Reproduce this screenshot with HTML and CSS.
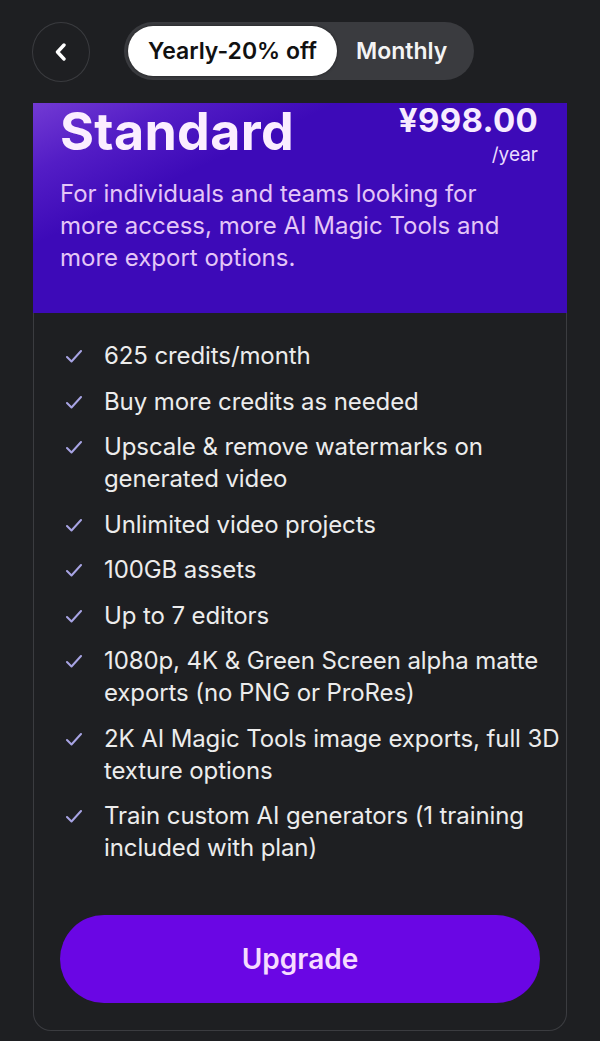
FILE: index.html
```html
<!DOCTYPE html>
<html lang="en">
<head>
<meta charset="utf-8">
<title>Standard plan</title>
<link rel="stylesheet" href="styles.css">
</head>
<body>
<div class="topbar">
  <button class="back" aria-label="Back">
    <svg width="14" height="18" viewBox="0 0 14 18"><polyline points="10,2 3.5,9 10,16" fill="none" stroke="#ffffff" stroke-width="3.4" stroke-linecap="round" stroke-linejoin="round"/></svg>
  </button>
  <div class="toggle">
    <span class="seg active">Yearly-20% off</span>
    <span class="seg">Monthly</span>
  </div>
</div>

<div class="card">
  <div class="card-head">
    <div class="head-row">
      <h1 class="title">Standard</h1>
      <div class="price">
        <div class="amount">¥998.00</div>
        <div class="period">/year</div>
      </div>
    </div>
    <p class="desc">For individuals and teams looking for more access, more AI Magic Tools and more export options.</p>
  </div>
  <ul class="features">
    <li><svg class="check" viewBox="0 0 16 13"><polyline points="1,7 5.5,11.5 15,1" /></svg><span>625 credits/month</span></li>
    <li><svg class="check" viewBox="0 0 16 13"><polyline points="1,7 5.5,11.5 15,1" /></svg><span>Buy more credits as needed</span></li>
    <li><svg class="check" viewBox="0 0 16 13"><polyline points="1,7 5.5,11.5 15,1" /></svg><span>Upscale &amp; remove watermarks on generated video</span></li>
    <li><svg class="check" viewBox="0 0 16 13"><polyline points="1,7 5.5,11.5 15,1" /></svg><span>Unlimited video projects</span></li>
    <li><svg class="check" viewBox="0 0 16 13"><polyline points="1,7 5.5,11.5 15,1" /></svg><span>100GB assets</span></li>
    <li><svg class="check" viewBox="0 0 16 13"><polyline points="1,7 5.5,11.5 15,1" /></svg><span>Up to 7 editors</span></li>
    <li><svg class="check" viewBox="0 0 16 13"><polyline points="1,7 5.5,11.5 15,1" /></svg><span>1080p, 4K &amp; Green Screen alpha matte exports (no PNG or ProRes)</span></li>
    <li><svg class="check" viewBox="0 0 16 13"><polyline points="1,7 5.5,11.5 15,1" /></svg><span>2K AI Magic Tools image exports, full 3D texture options</span></li>
    <li><svg class="check" viewBox="0 0 16 13"><polyline points="1,7 5.5,11.5 15,1" /></svg><span>Train custom AI generators (1 training included with plan)</span></li>
  </ul>
  <div class="cta">
    <button class="upgrade">Upgrade</button>
  </div>
</div>
</body>
</html>
```

FILE: styles.css
```css
* { box-sizing: border-box; }

html, body {
  margin: 0;
  padding: 0;
  background: #1e1f22;
}

body {
  font-family: Inter, "Noto Sans", "Liberation Sans", sans-serif;
  color: #ececec;
  height: 1041px;
  overflow: hidden;
}

.topbar {
  display: flex;
  align-items: center;
  gap: 34px;
  padding: 20px 0 0 32px;
  height: 82px;
}

.back {
  width: 58px;
  height: 60px;
  border-radius: 50%;
  border: 1px solid #3a3b3f;
  background: transparent;
  display: flex;
  align-items: center;
  justify-content: center;
  padding: 0;
  margin-top: 2px;
}

.toggle {
  display: flex;
  align-items: center;
  height: 58px;
  padding: 4px;
  border-radius: 29px;
  background: #3a3b3f;
}

.seg {
  height: 50px;
  display: flex;
  align-items: center;
  padding: 0 23px 0 19px;
  border-radius: 25px;
  font-size: 23px;
  font-weight: 600;
  color: #f4f4f4;
}

.seg.active {
  background: #ffffff;
  color: #111111;
  padding: 0 20px;
  box-shadow: 0 0 3px rgba(0,0,0,0.5);
}

.card {
  margin: 21px 0 0 33px;
  width: 534px;
  border: 1px solid #3b3c40;
  border-top: none;
  border-radius: 0 0 18px 18px;
}

.card-head {
  margin: 0 -1px;
  padding: 0 27px 39px 27px;
  background:
    linear-gradient(155deg, rgba(150,90,230,0.6) 0%, rgba(120,60,220,0.38) 15%, rgba(80,20,200,0) 31%),
    #3d0ab8;
}

.head-row {
  display: flex;
  justify-content: space-between;
  align-items: flex-start;
}

.title {
  margin: 0;
  font-size: 52px;
  line-height: 58px;
  font-weight: 700;
  color: #fbeeff;
  letter-spacing: 0.3px;
}

.price {
  text-align: right;
  padding-right: 2px;
}

.amount {
  font-size: 33px;
  line-height: 34px;
  font-weight: 700;
  color: #f7ecff;
  letter-spacing: 0.3px;
}

.period {
  margin-top: 6px;
  font-size: 19px;
  line-height: 24px;
  color: #eadcff;
}

.desc {
  margin: 11px 0 0;
  font-size: 24px;
  line-height: 32px;
  color: #e4c6f7;
}

.features {
  list-style: none;
  margin: 0;
  padding: 27px 0 0 32px;
  display: flex;
  flex-direction: column;
  gap: 13.5px;
}

.features li {
  display: flex;
  align-items: flex-start;
  gap: 22px;
  font-size: 24px;
  line-height: 32px;
  color: #ececec;
  letter-spacing: -0.1px;
}

.check {
  flex: none;
  width: 16px;
  height: 13px;
  margin-top: 10px;
  fill: none;
  stroke: #a8a4e4;
  stroke-width: 2;
  stroke-linecap: round;
  stroke-linejoin: round;
}

.cta {
  padding: 51px 26px 27px 26px;
}

.upgrade {
  display: block;
  width: 100%;
  height: 88px;
  border: none;
  border-radius: 44px;
  background: #6a06e4;
  color: #f6dcff;
  font-family: Inter, "Noto Sans", "Liberation Sans", sans-serif;
  font-size: 28px;
  font-weight: 600;
}
```
